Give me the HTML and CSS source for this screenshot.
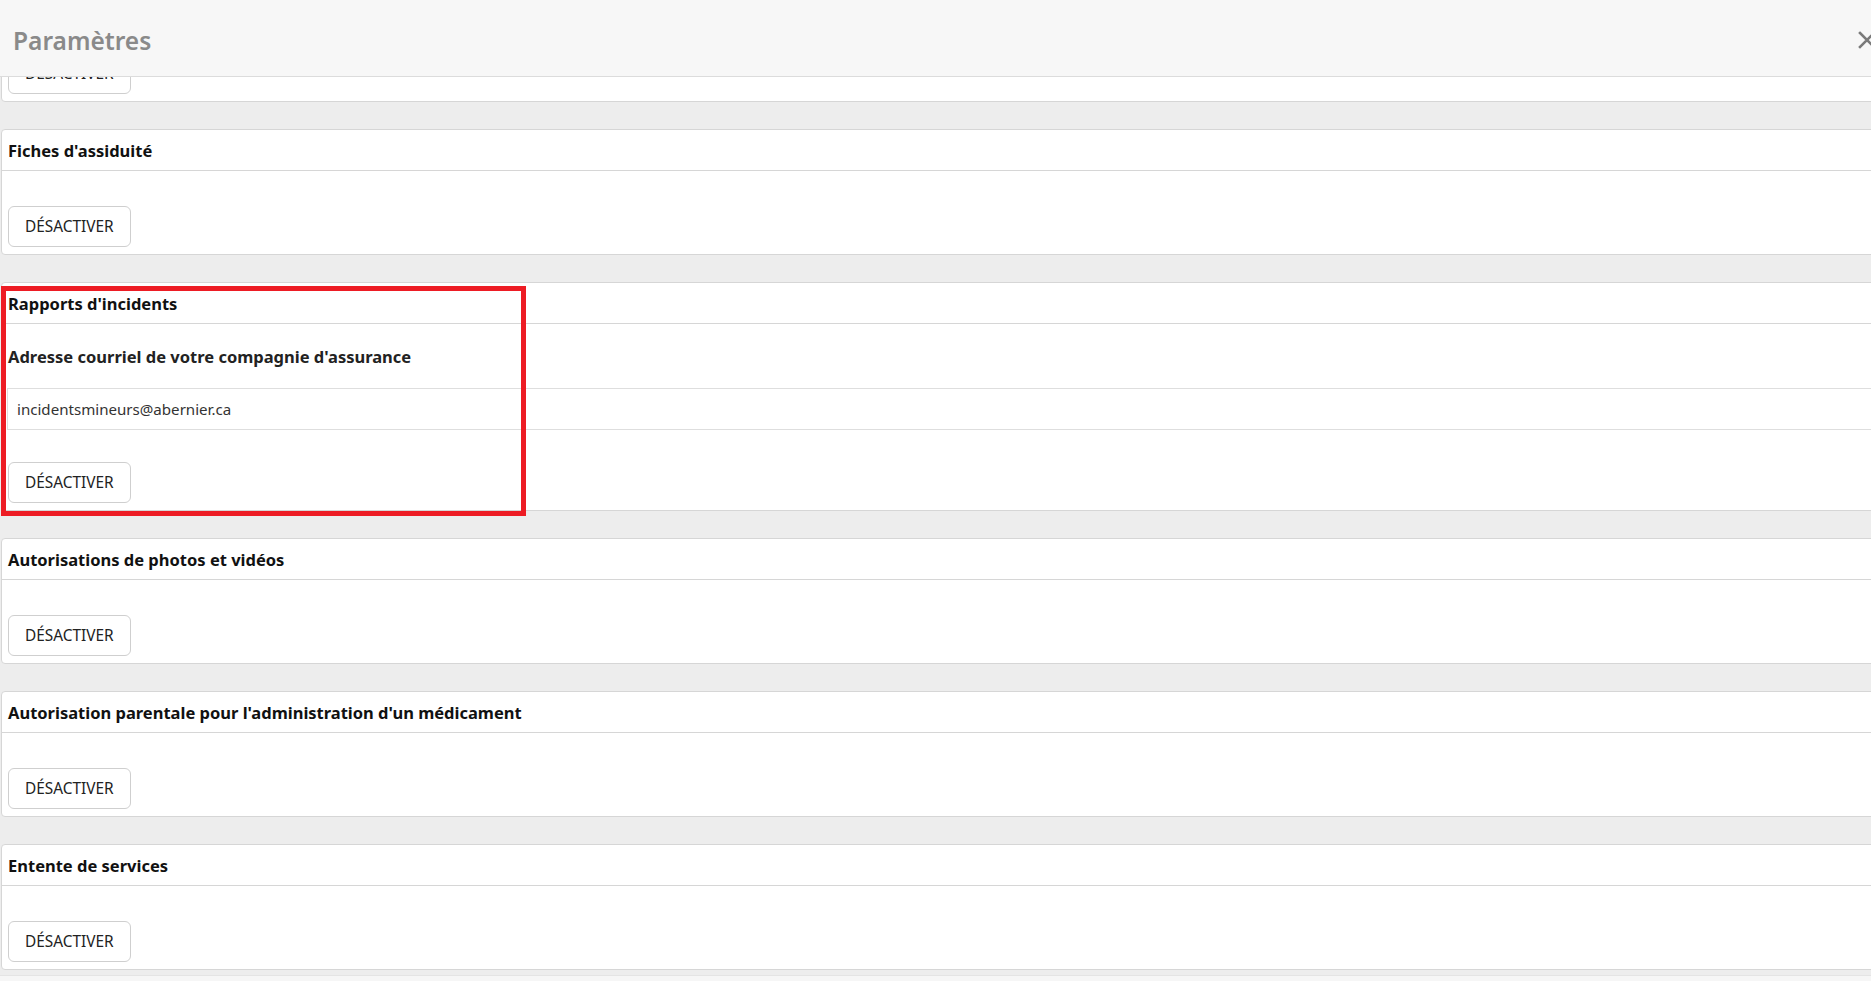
FILE: index.html
```html
<!DOCTYPE html>
<html lang="fr">
<head>
    <meta charset="UTF-8">
    <meta name="viewport" content="width=device-width, initial-scale=1.0">
    <title>Paramètres</title>
    <link rel="stylesheet" href="styles.css">
</head>
<body>
    <div class="modal">
        <header class="modal-header">
            <h1 class="modal-title">Paramètres</h1>
            <button class="close-button" aria-label="Fermer">
                <svg width="18" height="18" viewBox="0 0 18 18">
                    <path d="M2 2 L16 16 M16 2 L2 16" stroke="#7a7a7a" stroke-width="2.6" stroke-linecap="square" fill="none"/>
                </svg>
            </button>
        </header>

        <div class="modal-body">
            <div class="settings-list">
                <!-- previous section, scrolled mostly under the header -->
                <section class="card">
                    <div class="card-header">Formulaires</div>
                    <div class="card-body">
                        <button class="btn">Désactiver</button>
                    </div>
                </section>

                <section class="card">
                    <div class="card-header">Fiches d'assiduité</div>
                    <div class="card-body">
                        <button class="btn">Désactiver</button>
                    </div>
                </section>

                <section class="card">
                    <div class="card-header">Rapports d'incidents</div>
                    <div class="card-body">
                        <div class="field">
                            <label class="field-label" for="insurance-email">Adresse courriel de votre compagnie d'assurance</label>
                            <input class="field-input" id="insurance-email" type="text" value="incidentsmineurs@abernier.ca">
                        </div>
                        <button class="btn">Désactiver</button>
                    </div>
                    <div class="highlight"></div>
                </section>

                <section class="card">
                    <div class="card-header">Autorisations de photos et vidéos</div>
                    <div class="card-body">
                        <button class="btn">Désactiver</button>
                    </div>
                </section>

                <section class="card">
                    <div class="card-header">Autorisation parentale pour l'administration d'un médicament</div>
                    <div class="card-body">
                        <button class="btn">Désactiver</button>
                    </div>
                </section>

                <section class="card">
                    <div class="card-header">Entente de services</div>
                    <div class="card-body">
                        <button class="btn">Désactiver</button>
                    </div>
                </section>
            </div>
        </div>

        <footer class="modal-footer"></footer>
    </div>
</body>
</html>
```

FILE: styles.css
```css
body, html {
    margin: 0;
    padding: 0;
    height: 100%;
    font-family: 'Noto Sans', 'Open Sans', sans-serif;
    overflow: hidden;
}

.modal {
    display: flex;
    flex-direction: column;
    height: 100vh;
    background-color: #ededed;
}

.modal-header {
    flex: 0 0 auto;
    height: 76px;
    display: flex;
    align-items: center;
    justify-content: space-between;
    padding-left: 13px;
    background-color: #f7f7f7;
    border-bottom: 1px solid #dcdcdc;
    position: relative;
    z-index: 2;
}

.modal-title {
    margin: 0;
    font-size: 24.5px;
    font-weight: 600;
    color: #8a8a8a;
    padding-top: 4px;
}

.close-button {
    border: none;
    background: none;
    padding: 0;
    margin-right: -5px;
    margin-top: 3px;
    display: flex;
    cursor: pointer;
}

.modal-body {
    flex: 1 1 auto;
    overflow: hidden;
}

.modal-footer {
    flex: 0 0 auto;
    height: 5px;
    background-color: #f6f6f6;
    border-top: 1px solid #e4e4e4;
}

.settings-list {
    margin-top: -101px; /* scrolled: first section sits under the header */
    margin-right: -30px;
    padding-left: 1px;
}

.card {
    position: relative;
    background-color: #ffffff;
    border: 1px solid #d6d6d6;
    border-radius: 4px;
    margin-bottom: 27px;
}

.card-header {
    height: 38px;
    line-height: 38px;
    padding: 2px 0 0 6px;
    font-size: 16.5px;
    font-weight: 700;
    color: #111;
    border-bottom: 1px solid #d6d6d6;
}

.card-body {
    padding: 0 5px 7px;
}

.btn {
    display: block;
    height: 41px;
    margin-top: 35px;
    margin-left: 1px;
    padding: 0 16px;
    background-color: #ffffff;
    border: 1px solid #cfcfcf;
    border-radius: 6px;
    font-family: inherit;
    font-size: 15.4px;
    color: #222;
    text-transform: uppercase;
}

.field {
    padding-top: 21px;
}

.field-label {
    display: block;
    height: 24px;
    line-height: 24px;
    margin-bottom: 19px;
    margin-left: 1px;
    font-size: 16.5px;
    font-weight: 700;
    color: #222;
}

.field-input {
    display: block;
    box-sizing: border-box;
    width: 100%;
    height: 42px;
    padding: 0 9px;
    border: 1px solid #dedede;
    border-right: none;
    font-family: inherit;
    font-size: 15.1px;
    color: #333;
    outline: none;
}

.field + .btn {
    margin-top: 32px;
}

/* red annotation frame around the incidents section */
.highlight {
    position: absolute;
    top: 3px;
    left: -1px;
    width: 525px;
    height: 230px;
    box-sizing: border-box;
    border: 5px solid #ed1c24;
    pointer-events: none;
}
```
